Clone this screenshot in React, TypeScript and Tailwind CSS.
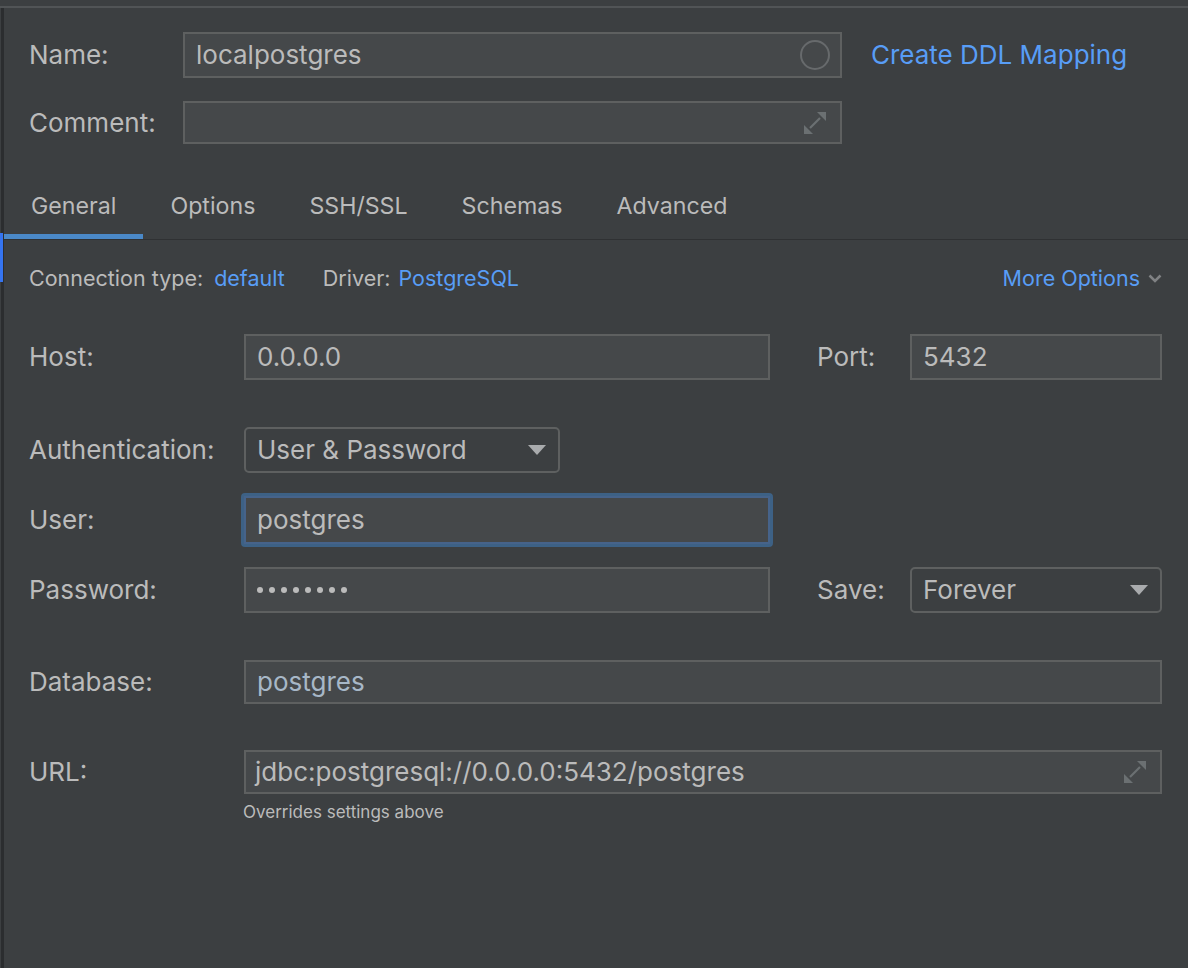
import { FC, ReactNode } from "react";

const ExpandIcon: FC = () => (
  <svg width="26" height="26" viewBox="0 0 26 26" fill="none">
    <path d="M15 2h9v9z" fill="#6b7072" />
    <path d="M2 15v9h9z" fill="#6b7072" />
    <path d="M8 18l10-10" stroke="#6b7072" strokeWidth="2.2" />
  </svg>
);

const Triangle: FC = () => (
  <svg width="18" height="10" viewBox="0 0 18 10">
    <path d="M0 0h18l-9 10z" fill="#a9abad" />
  </svg>
);

const Label: FC<{ children: ReactNode; w?: string }> = ({ children, w = "w-[215px]" }) => (
  <div className={`${w} shrink-0 whitespace-nowrap text-[26px] leading-[32px] text-[#bbbbbb]`}>
    {children}
  </div>
);

const Field: FC<{ children?: ReactNode; className?: string; tone?: string }> = ({
  children,
  className = "",
  tone = "text-[#bbbbbb]",
}) => (
  <div
    className={`flex shrink-0 items-center border-2 border-[#5e6060] bg-[#45484a] px-[11px] text-[26px] leading-[32px] ${tone} ${className}`}
  >
    {children}
  </div>
);

const Select: FC<{ value: string; className?: string }> = ({ value, className = "" }) => (
  <div
    className={`h-[46px] flex shrink-0 items-center justify-between rounded-[5px] border-2 border-[#5e6060] bg-[#3c3f41] pl-[11px] pr-[12px] text-[26px] leading-[32px] text-[#bbbbbb] ${className}`}
  >
    <span>{value}</span>
    <Triangle />
  </div>
);

const tabs = ["General", "Options", "SSH/SSL", "Schemas", "Advanced"];

const App: FC = () => {
  return (
    <div
      className="w-[1188px] h-[968px] overflow-hidden bg-[#3c3f41] pt-[6px]"
      style={{ fontFamily: "Inter, 'Noto Sans', sans-serif" }}
    >
      <div className="h-[2px] bg-[#515456]" />
      <div className="relative h-[960px] border-l-[3px] border-[#2b2d2f] ml-px">
        <div className="absolute -left-[4px] top-[225px] h-[49px] w-[3px] bg-[#3574f0]" />

        {/* name + comment */}
        <div className="pl-[25px] pt-[24px]">
          <div className="flex items-center">
            <Label w="w-[154px]">Name:</Label>
            <Field className="w-[659px] h-[46px] justify-between pr-[10px]">
              <span>localpostgres</span>
              <span className="h-[30px] w-[30px] rounded-full border-2 border-[#676a6c]" />
            </Field>
            <a className="ml-[29px] whitespace-nowrap text-[26px] leading-[32px] text-[#589df6]">
              Create DDL Mapping
            </a>
          </div>
          <div className="mt-[23px] flex items-center">
            <Label w="w-[154px]">Comment:</Label>
            <Field className="w-[659px] h-[43px] justify-end pr-[12px]">
              <ExpandIcon />
            </Field>
          </div>
        </div>

        {/* tabs */}
        <div className="mt-[29px] flex h-[67px] border-b border-[#2f3133]">
          {tabs.map((t, i) => (
            <div
              key={t}
              className="relative flex items-center px-[27px] text-[23.2px] text-[#bbbbbb]"
            >
              {t}
              {i === 0 && (
                <div className="absolute bottom-0 left-0 right-0 h-[5px] bg-[#4a88c7]" />
              )}
            </div>
          ))}
        </div>

        {/* connection type row */}
        <div className="flex items-center pl-[25px] pr-[26px] pt-[22px] text-[21.5px] leading-[32px]">
          <span className="text-[#bbbbbb]">Connection type:</span>
          <span className="ml-[11px] text-[#589df6]">default</span>
          <span className="ml-[38px] text-[#bbbbbb]">Driver:</span>
          <span className="ml-[8px] text-[#589df6]">PostgreSQL</span>
          <span className="ml-auto flex items-center gap-[8px] text-[#589df6]">
            More Options
            <svg width="14" height="9" viewBox="0 0 14 9" fill="none">
              <path d="M1.5 1.5l5.5 5.5 5.5-5.5" stroke="#808284" strokeWidth="2.5" />
            </svg>
          </span>
        </div>

        {/* form */}
        <div className="pl-[25px] pr-[26px]">
          <div className="mt-[40px] flex items-center">
            <Label>Host:</Label>
            <Field className="w-[526px] h-[46px]">0.0.0.0</Field>
            <Label w="w-[93px] ml-[47px]">Port:</Label>
            <Field className="w-[252px] h-[46px]">5432</Field>
          </div>

          <div className="mt-[47px] flex items-center">
            <Label>Authentication:</Label>
            <Select value="User & Password" className="w-[316px]" />
          </div>

          <div className="mt-[20px] flex items-center">
            <Label w="w-[212px]">User:</Label>
            <div className="rounded-[4px] border-[3px] border-[#3d6185]">
              <Field className="w-[526px] h-[48px] border-[#46638a]">postgres</Field>
            </div>
          </div>

          <div className="mt-[20px] flex items-center">
            <Label>Password:</Label>
            <Field className="w-[526px] h-[46px] gap-[6px]">
              {Array.from({ length: 8 }).map((_, i) => (
                <span key={i} className="h-[6px] w-[6px] rounded-full bg-[#bbbbbb]" />
              ))}
            </Field>
            <Label w="w-[93px] ml-[47px]">Save:</Label>
            <Select value="Forever" className="w-[252px]" />
          </div>

          <div className="mt-[47px] flex items-center">
            <Label>Database:</Label>
            <Field className="w-[918px] h-[44px]" tone="text-[#a7b7c7]">
              postgres
            </Field>
          </div>

          <div className="mt-[46px] flex items-center">
            <Label>URL:</Label>
            <Field className="w-[918px] h-[44px] justify-between pl-[9px] pr-[12px]">
              <span>jdbc:postgresql://0.0.0.0:5432/postgres</span>
              <ExpandIcon />
            </Field>
          </div>
          <div className="ml-[214px] mt-[6px] text-[17px] leading-[24px] text-[#bbbbbb]">
            Overrides settings above
          </div>
        </div>
      </div>
    </div>
  );
};

export default App;
